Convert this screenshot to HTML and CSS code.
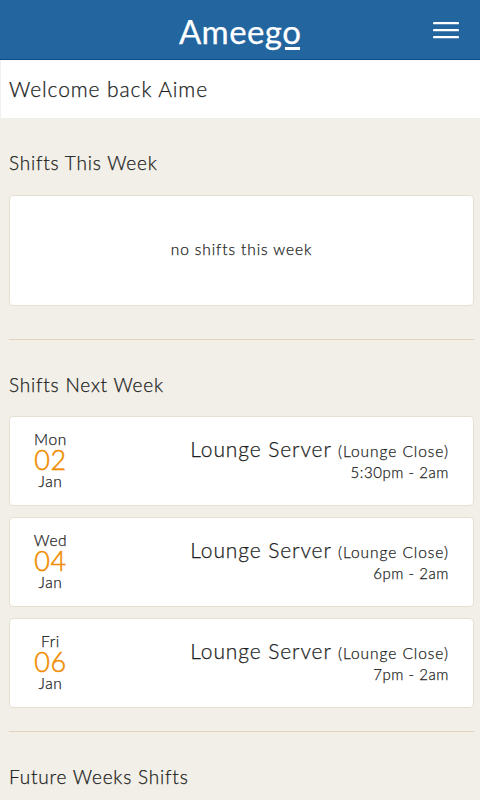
FILE: index.html
```html
<!DOCTYPE html>
<html lang="en">
<head>
    <meta charset="UTF-8">
    <meta name="viewport" content="width=device-width, initial-scale=1.0">
    <title>Ameego</title>
    <link rel="stylesheet" href="styles.css">
</head>
<body>

<header class="navbar">
    <div class="logo">Ameeg<span class="logo-o">o</span></div>
    <button class="menu" type="button" aria-label="Menu">
        <svg width="26" height="18" viewBox="0 0 26 18">
            <path d="M1 2.2h24M1 9.2h24M1 16.2h24" stroke="#fff" stroke-width="2.2" stroke-linecap="round"/>
        </svg>
    </button>
</header>

<h1 class="welcome">Welcome back Aime</h1>

<main class="container">
    <section class="week">
        <h2>Shifts This Week</h2>
        <div class="card empty">no shifts this week</div>
    </section>

    <section class="week">
        <h2>Shifts Next Week</h2>
        <div class="card shift">
            <div class="date">
                <span>Mon</span>
                <span class="day">02</span>
                <span>Jan</span>
            </div>
            <div class="info">
                <div class="role">Lounge Server <small>(Lounge Close)</small></div>
                <div class="time">5:30pm - 2am</div>
            </div>
        </div>
        <div class="card shift">
            <div class="date">
                <span>Wed</span>
                <span class="day">04</span>
                <span>Jan</span>
            </div>
            <div class="info">
                <div class="role">Lounge Server <small>(Lounge Close)</small></div>
                <div class="time">6pm - 2am</div>
            </div>
        </div>
        <div class="card shift">
            <div class="date">
                <span>Fri</span>
                <span class="day">06</span>
                <span>Jan</span>
            </div>
            <div class="info">
                <div class="role">Lounge Server <small>(Lounge Close)</small></div>
                <div class="time">7pm - 2am</div>
            </div>
        </div>
    </section>

    <section class="week future">
        <h2>Future Weeks Shifts</h2>
    </section>
</main>

</body>
</html>
```

FILE: styles.css
```css
body {
    font-family: Lato, "Open Sans", sans-serif;
    font-weight: 300;
    margin: 0;
    height: 800px;
    overflow: hidden;
    background-color: #f2efe8;
    color: #1c1e22;
    -webkit-text-stroke: 0.25px;
}
.navbar {
    position: relative;
    display: flex;
    align-items: center;
    justify-content: center;
    height: 60px;
    box-sizing: border-box;
    padding-top: 2px;
    background-color: #22659f;
    border-bottom: 1px solid #064b8c;
}
.logo {
    color: #fff;
    font-size: 33px;
    font-weight: 400;
    line-height: 40px;
    letter-spacing: 0.4px;
}
.logo-o {
    position: relative;
    letter-spacing: 0;
}
.logo-o::after {
    content: "";
    position: absolute;
    left: 3px;
    right: 1px;
    bottom: 1px;
    height: 3px;
    background-color: #fff;
}
.menu {
    position: absolute;
    top: 21px;
    right: 21px;
    padding: 0;
    border: none;
    background: none;
    line-height: 0;
}
.welcome {
    margin: 0;
    padding-left: 8px;
    height: 59px;
    line-height: 58px;
    background-color: #fff;
    border: 1px solid #f0eff0;
    border-width: 0 0 1px 1px;
    box-sizing: border-box;
    font-size: 21px;
    font-weight: 300;
    letter-spacing: 0.9px;
}
.container {
    padding: 0 6px 0 9px;
}
.week {
    padding-top: 31px;
}
.week + .week {
    margin-top: 33px;
    padding-top: 32px;
    border-top: 1px solid #e1d5b8;
}
.week.future {
    margin-top: 23px;
}
h2 {
    margin: 0 0 19px;
    font-size: 19px;
    line-height: 26px;
    font-weight: 300;
    letter-spacing: 0.8px;
}
.week + .week h2 {
    margin-bottom: 18px;
}
.card {
    box-sizing: border-box;
    background-color: #fff;
    border: 1px solid #e6e0d2;
    border-radius: 4px;
}
.empty {
    height: 111px;
    line-height: 107px;
    text-align: center;
    font-size: 15.5px;
    letter-spacing: 0.9px;
}
.shift {
    display: flex;
    justify-content: space-between;
    height: 90px;
    padding: 12px 24px 0 20px;
    margin-bottom: 11px;
}
.shift:last-of-type {
    margin-bottom: 0;
}
.date {
    display: flex;
    flex-direction: column;
    width: 41px;
    text-align: center;
    font-size: 15.5px;
    line-height: 21px;
    letter-spacing: 0.6px;
}
.day {
    color: #f08c00;
    font-size: 27px;
    line-height: 20px;
    padding-bottom: 1px;
    letter-spacing: 0.6px;
    -webkit-text-stroke: 0.5px;
}
.info {
    padding-top: 7px;
    text-align: right;
}
.role {
    font-size: 21px;
    line-height: 25px;
    letter-spacing: 0.9px;
}
.role small {
    font-size: 15.5px;
    letter-spacing: 0.95px;
}
.time {
    font-size: 15px;
    line-height: 16px;
    letter-spacing: 0.55px;
}
```
